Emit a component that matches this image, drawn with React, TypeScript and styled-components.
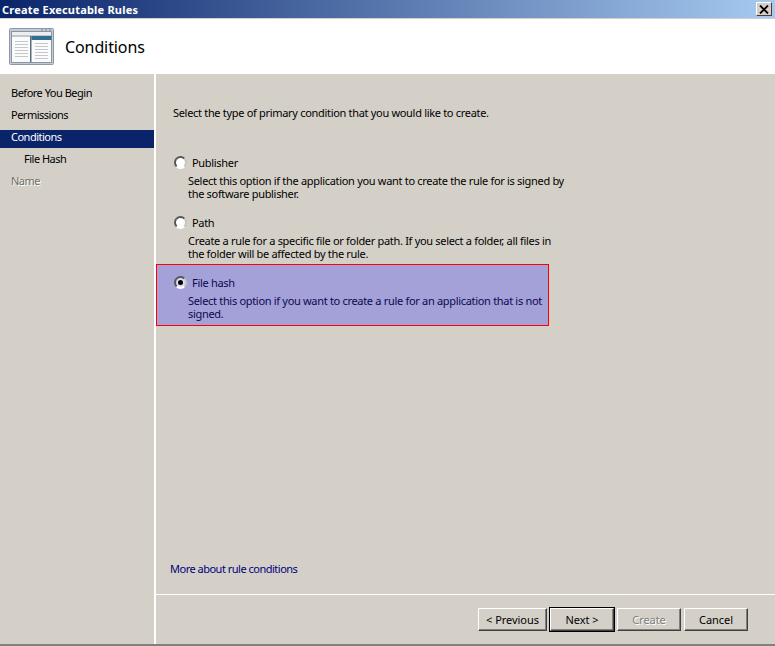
import React from "react";
import styled, { createGlobalStyle } from "styled-components";

const Global = createGlobalStyle`
  html, body { margin: 0; padding: 0; background: #d4d0c8; }
  body { font-family: "Noto Sans", "Liberation Sans", Arial, sans-serif; font-size: 11px; letter-spacing: -0.31px; color: #000; }
`;

const Window = styled.div`
  width: 775px; height: 646px; display: flex; flex-direction: column; overflow: hidden;
  background: #d4d0c8; border-bottom: 2px solid #808080; box-sizing: border-box;
`;
const TitleBar = styled.div`
  height: 18px; flex: none; display: flex; align-items: center; justify-content: space-between;
  padding: 0 3px 0 2px; background: linear-gradient(90deg, #0a246a, #a6caf0);
  color: #fff; font: bold 11px "Noto Sans", "Liberation Sans", sans-serif; letter-spacing: 0.2px;
`;
const CloseButton = styled.div`
  width: 16px; height: 14px; display: flex; align-items: center; justify-content: center; box-sizing: border-box;
  background: #d4d0c8; border: 1px solid; border-color: #fff #404040 #404040 #fff;
`;
const Header = styled.div`
  height: 56px; flex: none; display: flex; align-items: center; gap: 11px; padding: 0 0 0 9px;
  background: #fff; border-top: 1px solid #d4d0c8; box-sizing: border-box;
`;
const HeaderTitle = styled.h1`
  margin: 0; font: 400 16px/20px "Noto Sans", "Liberation Sans", sans-serif; letter-spacing: -0.1px; color: #000;
`;
const Body = styled.div`flex: 1; display: flex; min-height: 0;`;
const Sidebar = styled.nav`
  width: 156px; flex: none; box-sizing: border-box; border-right: 2px solid #fff;
  padding-top: 12px; display: flex; flex-direction: column; gap: 4px; letter-spacing: -0.5px;
`;
const NavItem = styled.div<{ $active?: boolean; $muted?: boolean; $sub?: boolean }>`
  height: 18px; box-sizing: border-box; padding: 0 0 4px ${p => (p.$sub ? 24 : 11)}px; line-height: 14px;
  background: ${p => (p.$active ? "#0a246a" : "transparent")};
  color: ${p => (p.$active ? "#fff" : p.$muted ? "#716f64" : "#000")};
  text-shadow: ${p => (p.$muted ? "1px 1px 0 #fff" : "none")};
`;
const Main = styled.main`flex: 1; display: flex; flex-direction: column; min-width: 0;`;
const Content = styled.div`flex: 1; display: flex; flex-direction: column; min-height: 0;`;
const Prompt = styled.p`margin: 32px 0 0 17px; line-height: 14px;`;
const Options = styled.div`margin-top: 23px; display: flex; flex-direction: column;`;
const Option = styled.label<{ $highlight?: boolean; $after?: number }>`
  width: 393px; height: 62px; box-sizing: border-box; display: block;
  padding: ${p => (p.$highlight ? 10 : 11)}px 0 0 17px;
  margin-bottom: ${p => p.$after ?? 0}px;
  border: 1px solid ${p => (p.$highlight ? "#ff0000" : "transparent")};
  background: ${p => (p.$highlight ? "#a4a0d8" : "transparent")};
  color: ${p => (p.$highlight ? "#0a0a50" : "#000")};
`;
const OptionHead = styled.div`display: flex; align-items: center; gap: 5px; height: 14px;`;
const Radio = styled.input<{ $tint?: boolean }>`
  appearance: none; margin: 0; width: 13px; height: 13px; border-radius: 50%; flex: none; box-sizing: border-box;
  background: ${p => (p.$tint ? "#dcdcf4" : "#fff")}; border: 2px solid;
  border-color: #555 #c8c4bc #fff #555; position: relative;
  &:checked::after {
    content: ""; position: absolute; left: 2px; top: 2px; width: 5px; height: 5px; border-radius: 50%; background: #000;
  }
`;
const OptionText = styled.p`margin: 5px 0 0 14px; line-height: 13px; width: 378px;`;
const MoreLink = styled.a`margin: auto 0 18px 14px; line-height: 14px; letter-spacing: -0.5px; color: #00007f; text-decoration: none;`;
const Footer = styled.footer`
  height: 50px; flex: none; box-sizing: border-box; border-top: 1px solid #fff;
  display: flex; justify-content: flex-end; gap: 3px; padding: 13px 27px 0 0;
`;
const Btn = styled.button<{ $w: number; $default?: boolean }>`
  width: ${p => p.$w}px; height: 23px; padding: 0; box-sizing: border-box; background: #d4d0c8;
  font: 11px "Noto Sans", "Liberation Sans", sans-serif; letter-spacing: -0.05px; color: #000;
  border: 1px solid; border-color: #fff #404040 #404040 #fff;
  box-shadow: ${p => (p.$default ? "0 0 0 1px #000, inset -1px -1px 0 #808080" : "inset -1px -1px 0 #808080")};
  &:disabled { color: #808080; text-shadow: 1px 1px 0 #fff; }
`;

const WizardIcon = () => (
  <svg width="45" height="37" viewBox="0 0 45 37" aria-hidden="true">
    <rect x="0.5" y="0.5" width="44" height="36" rx="1" fill="#c3cbd5" stroke="#8f99a6" />
    <rect x="32" y="1.5" width="2" height="1" fill="#7d8896" />
    <rect x="36" y="1.5" width="2" height="1" fill="#7d8896" />
    <rect x="40" y="1.5" width="2" height="1" fill="#7d8896" />
    <rect x="2.5" y="3.5" width="40" height="31" fill="#fbfbfb" stroke="#8a94a3" />
    <rect x="3" y="4" width="39" height="3" fill="#eceef1" />
    <rect x="2" y="7.5" width="41" height="1" fill="#8a94a3" />
    <rect x="21" y="8" width="1.5" height="26" fill="#5b6a80" />
    <rect x="22.5" y="8" width="20" height="4" fill="#2f6f92" />
    {[13, 16, 19, 22, 25, 28].map(y => (
      <rect key={y} x="6" y={y} width="13" height="1" fill="#c4c8ce" />
    ))}
    {[15, 18, 21, 24, 27, 30].map(y => (
      <rect key={y} x="26" y={y} width="13" height="1" fill="#c4c8ce" />
    ))}
  </svg>
);

export default function App() {
  return (
    <>
      <Global />
      <Window>
        <TitleBar>
          <span>Create Executable Rules</span>
          <CloseButton>
            <svg width="10" height="9" viewBox="0 0 10 9"><path d="M1 0.5 L9 8.5 M9 0.5 L1 8.5" stroke="#000" strokeWidth="1.8" /></svg>
          </CloseButton>
        </TitleBar>
        <Header>
          <WizardIcon />
          <HeaderTitle>Conditions</HeaderTitle>
        </Header>
        <Body>
          <Sidebar>
            <NavItem>Before You Begin</NavItem>
            <NavItem>Permissions</NavItem>
            <NavItem $active>Conditions</NavItem>
            <NavItem $sub>File Hash</NavItem>
            <NavItem $muted>Name</NavItem>
          </Sidebar>
          <Main>
            <Content>
              <Prompt>Select the type of primary condition that you would like to create.</Prompt>
              <Options>
                <Option $after={-2}>
                  <OptionHead><Radio type="radio" name="c" readOnly /><span>Publisher</span></OptionHead>
                  <OptionText>Select this option if the application you want to create the rule for is signed by the software publisher.</OptionText>
                </Option>
                <Option $after={-1}>
                  <OptionHead><Radio type="radio" name="c" readOnly /><span>Path</span></OptionHead>
                  <OptionText>Create a rule for a specific file or folder path. If you select a folder, all files in the folder will be affected by the rule.</OptionText>
                </Option>
                <Option $highlight>
                  <OptionHead><Radio type="radio" name="c" $tint defaultChecked /><span>File hash</span></OptionHead>
                  <OptionText>Select this option if you want to create a rule for an application that is not signed.</OptionText>
                </Option>
              </Options>
              <MoreLink href="#">More about rule conditions</MoreLink>
            </Content>
            <Footer>
              <Btn $w={69}>&lt; Previous</Btn>
              <Btn $w={64} $default>Next &gt;</Btn>
              <Btn $w={64} disabled>Create</Btn>
              <Btn $w={64}>Cancel</Btn>
            </Footer>
          </Main>
        </Body>
      </Window>
    </>
  );
}
